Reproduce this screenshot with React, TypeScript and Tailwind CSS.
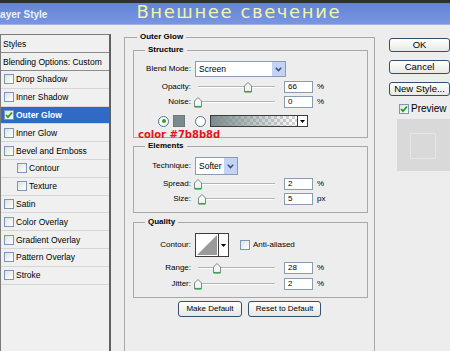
import React from "react";

type Item = { t: string; sel?: boolean; sub?: boolean };

const items: Item[] = [
  { t: "Drop Shadow" },
  { t: "Inner Shadow" },
  { t: "Outer Glow", sel: true },
  { t: "Inner Glow" },
  { t: "Bevel and Emboss" },
  { t: "Contour", sub: true },
  { t: "Texture", sub: true },
  { t: "Satin" },
  { t: "Color Overlay" },
  { t: "Gradient Overlay" },
  { t: "Pattern Overlay" },
  { t: "Stroke" },
];

function Check({ on = false }: { on?: boolean }) {
  return (
    <span className="w-[10px] h-[10px] shrink-0 border border-[#7a96b8] bg-linear-to-br from-[#e2e2dc] to-white flex items-center justify-center">
      {on && (
        <svg width="8" height="8" viewBox="0 0 8 8">
          <path d="M1 4 L3 6.2 L7 1.5" fill="none" stroke="#21a121" strokeWidth="1.8" />
        </svg>
      )}
    </span>
  );
}

function Radio({ on = false }: { on?: boolean }) {
  return (
    <span className="w-[11px] h-[11px] shrink-0 rounded-full border border-[#4f6f92] bg-white flex items-center justify-center">
      {on && <span className="w-[4px] h-[4px] rounded-full bg-[#24a524]" />}
    </span>
  );
}

function Legend({ children, className = "" }: { children: React.ReactNode; className?: string }) {
  return <div className={`-mt-[6px] w-fit bg-[#ededed] px-[3px] font-bold leading-[10px] ${className}`}>{children}</div>;
}

function Slider({ pos }: { pos: number }) {
  return (
    <div className="relative w-[84px] h-[12px] shrink-0">
      <div className="absolute left-[3px] w-[77px] top-[5px] h-[2px] border-t border-[#b4b4b4] border-b border-b-white" />
      <svg className="absolute top-[1px]" style={{ left: pos }} width="8" height="11" viewBox="0 0 8 11">
        <polygon points="0.5,10 0.5,4 4,0.5 7.5,4 7.5,10" fill="#f6f6f6" stroke="#7d8a80" />
        <line x1="1" y1="9.6" x2="7" y2="9.6" stroke="#2fa84f" strokeWidth="1.4" />
      </svg>
    </div>
  );
}

function Num({ v }: { v: string }) {
  return (
    <div className="ml-[5px] w-[29px] h-[12px] border border-[#8a9bb0] bg-white pl-[3px] leading-[10px]">{v}</div>
  );
}

function SliderRow({ label, pos, v, unit, className = "" }: { label: string; pos: number; v: string; unit: string; className?: string }) {
  return (
    <div className={`flex items-center h-[15px] ${className}`}>
      <span className="w-[57px] text-right">{label}</span>
      <div className="ml-[4px] flex items-center">
        <Slider pos={pos} />
        <Num v={v} />
        <span className="ml-[4px]">{unit}</span>
      </div>
    </div>
  );
}

function Select({ value, w, h }: { value: string; w: string; h: string }) {
  return (
    <div className={`${w} ${h} border border-[#8a9bb0] bg-white flex items-stretch`}>
      <span className="flex-1 pl-[3px] flex items-center text-[8.5px]">{value}</span>
      <span className="w-[13px] bg-[#c3d3f6] flex items-center justify-center">
        <svg width="7" height="5" viewBox="0 0 7 5">
          <path d="M0.8 0.8 L3.5 3.6 L6.2 0.8" fill="none" stroke="#3b4e78" strokeWidth="1.5" />
        </svg>
      </span>
    </div>
  );
}

function Btn({ children, w }: { children: React.ReactNode; w: string }) {
  return (
    <div className={`${w} h-[16px] rounded-[3px] border border-[#34506e] bg-linear-to-b from-white to-[#e6e6e2] flex items-center justify-center`}>
      {children}
    </div>
  );
}

function SideBtn({ children, className = "" }: { children: React.ReactNode; className?: string }) {
  return (
    <div className={`w-[61px] h-[14px] rounded-[3px] border border-[#34506e] bg-linear-to-b from-white to-[#e8e8e4] flex items-center justify-center text-[9.5px] ${className}`}>
      {children}
    </div>
  );
}

function Arrow() {
  return (
    <svg width="5" height="3" viewBox="0 0 5 3">
      <polygon points="0,0 5,0 2.5,3" fill="#000" />
    </svg>
  );
}

function StyleList() {
  return (
    <div className="mt-[9px] w-[111px] h-[330px] shrink-0 border-l border-t border-[#7c7c7c] border-r-2 border-r-[#606060] bg-[#f0f0f0] text-[8.5px]">
      <div className="h-[18px] flex items-center pl-[2px] border-b border-[#8c8c8c]">Styles</div>
      <div className="h-[18px] flex items-center pl-[2px] border-b border-[#8c8c8c]">Blending Options: Custom</div>
      {items.map((it) => (
        <div
          key={it.t}
          className={`h-[17.8px] flex items-center border-b border-[#d6d6d6] ${it.sub ? "pl-[16px]" : "pl-[3px]"} ${it.sel ? "bg-[#316ac5] text-white font-bold" : ""}`}
        >
          <Check on={it.sel} />
          <span className="ml-[2px]">{it.t}</span>
        </div>
      ))}
    </div>
  );
}

export default function App() {
  return (
    <div className="w-[450px] h-[351px] overflow-hidden bg-[#ededed] font-['Liberation_Sans',Arial,sans-serif] text-[8px] leading-[10px] text-black">
      <div className="h-[3px] bg-[#303030]" />
      <div className="h-[22px] bg-linear-to-b from-[#6384d6] to-[#7896e0] flex items-start border-b border-[#9fb4e6]">
        <span className="ml-[-6px] mt-[6px] text-[10px] leading-[12px] font-bold text-[#eef2fb]">Layer Style</span>
        <span className="ml-[89px] font-['DejaVu_Sans',sans-serif] text-[18px] leading-[18px] tracking-[1.6px] text-[#f2f4a6]">
          Внешнее свечение
        </span>
      </div>

      <div className="flex">
        <StyleList />

        <div className="ml-[13px] mt-[12px] w-[251px] h-[330px] shrink-0 border border-[#a8a8a8] pl-[8px] pr-[6px]">
          <Legend className="ml-[4px]">Outer Glow</Legend>

          <div className="mt-[8px] w-[235px] h-[88px] border border-[#a8a8a8]">
            <Legend className="ml-[11px]">Structure</Legend>
            <div className="mt-[6px] flex items-center h-[16px]">
              <span className="w-[57px] text-right">Blend Mode:</span>
              <div className="ml-[4px]">
                <Select value="Screen" w="w-[91px]" h="h-[16px]" />
              </div>
            </div>
            <SliderRow className="mt-[2px]" label="Opacity:" pos={49} v="66" unit="%" />
            <SliderRow label="Noise:" pos={-1} v="0" unit="%" />
            <div className="mt-[4px] h-[16px] flex items-center">
              <span className="ml-[24px]"><Radio on /></span>
              <span className="ml-[4px] w-[12px] h-[12px] bg-[#7b8b8d] border border-[#6a7a7c]" />
              <span className="ml-[10px]"><Radio /></span>
              <div className="ml-[4px] w-[98px] h-[12px] border border-[#3c3c3c] flex">
                <div className="flex-1 bg-[linear-gradient(to_right,#7b8b8d,transparent),repeating-conic-gradient(#d2d2d2_0_25%,#ffffff_0_50%)] [background-size:100%_100%,6px_6px]" />
                <div className="w-[10px] bg-white border-l border-[#3c3c3c] flex items-center justify-center">
                  <Arrow />
                </div>
              </div>
            </div>
            <div className="ml-[4px] font-['DejaVu_Sans',sans-serif] font-bold text-[10px] leading-[11px] text-[#e3161e]">color #7b8b8d</div>
          </div>

          <div className="mt-[8px] w-[235px] h-[67px] border border-[#a8a8a8]">
            <Legend className="ml-[11px]">Elements</Legend>
            <div className="mt-[6px] flex items-center h-[18px]">
              <span className="w-[57px] text-right">Technique:</span>
              <div className="ml-[4px]">
                <Select value="Softer" w="w-[43px]" h="h-[18px]" />
              </div>
            </div>
            <SliderRow className="mt-[1px]" label="Spread:" pos={-1} v="2" unit="%" />
            <SliderRow label="Size:" pos={3} v="5" unit="px" />
          </div>

          <div className="mt-[9px] w-[235px] h-[76px] border border-[#a8a8a8]">
            <Legend className="ml-[11px]">Quality</Legend>
            <div className="mt-[6px] flex items-center h-[24px]">
              <span className="w-[57px] text-right">Contour:</span>
              <div className="ml-[4px] w-[34px] h-[24px] border border-[#3c3c3c] bg-white flex">
                <div className="flex-1 p-[1px]">
                  <svg width="20" height="20" viewBox="0 0 20 20" className="block">
                    <polygon points="0,20 20,0 20,20" fill="#9a9a9a" />
                  </svg>
                </div>
                <div className="w-[10px] border-l border-[#3c3c3c] flex items-center justify-center">
                  <Arrow />
                </div>
              </div>
              <span className="ml-[11px]"><Check /></span>
              <span className="ml-[3px]">Anti-aliased</span>
            </div>
            <SliderRow className="mt-[3px]" label="Range:" pos={18} v="28" unit="%" />
            <SliderRow className="mt-[1px]" label="Jitter:" pos={-1} v="2" unit="%" />
          </div>

          <div className="mt-[3px] flex">
            <div className="ml-[45px]"><Btn w="w-[64px]">Make Default</Btn></div>
            <div className="ml-[6px]"><Btn w="w-[73px]">Reset to Default</Btn></div>
          </div>
        </div>

        <div className="ml-[14px] mt-[13px] w-[61px] shrink-0 flex flex-col">
          <SideBtn>OK</SideBtn>
          <SideBtn className="mt-[8px]">Cancel</SideBtn>
          <SideBtn className="mt-[8px]">New Style...</SideBtn>
          <div className="mt-[8px] ml-[10px] h-[10px] flex items-center text-[10px]">
            <Check on />
            <span className="ml-[2px]">Preview</span>
          </div>
          <div className="mt-[5px] ml-[8px] w-[60px] h-[52px] bg-[#d9d9d9] pt-[14px] pl-[13px]">
            <div className="w-[26px] h-[26px] border border-[#e6e6e6]" />
          </div>
        </div>
      </div>
    </div>
  );
}
